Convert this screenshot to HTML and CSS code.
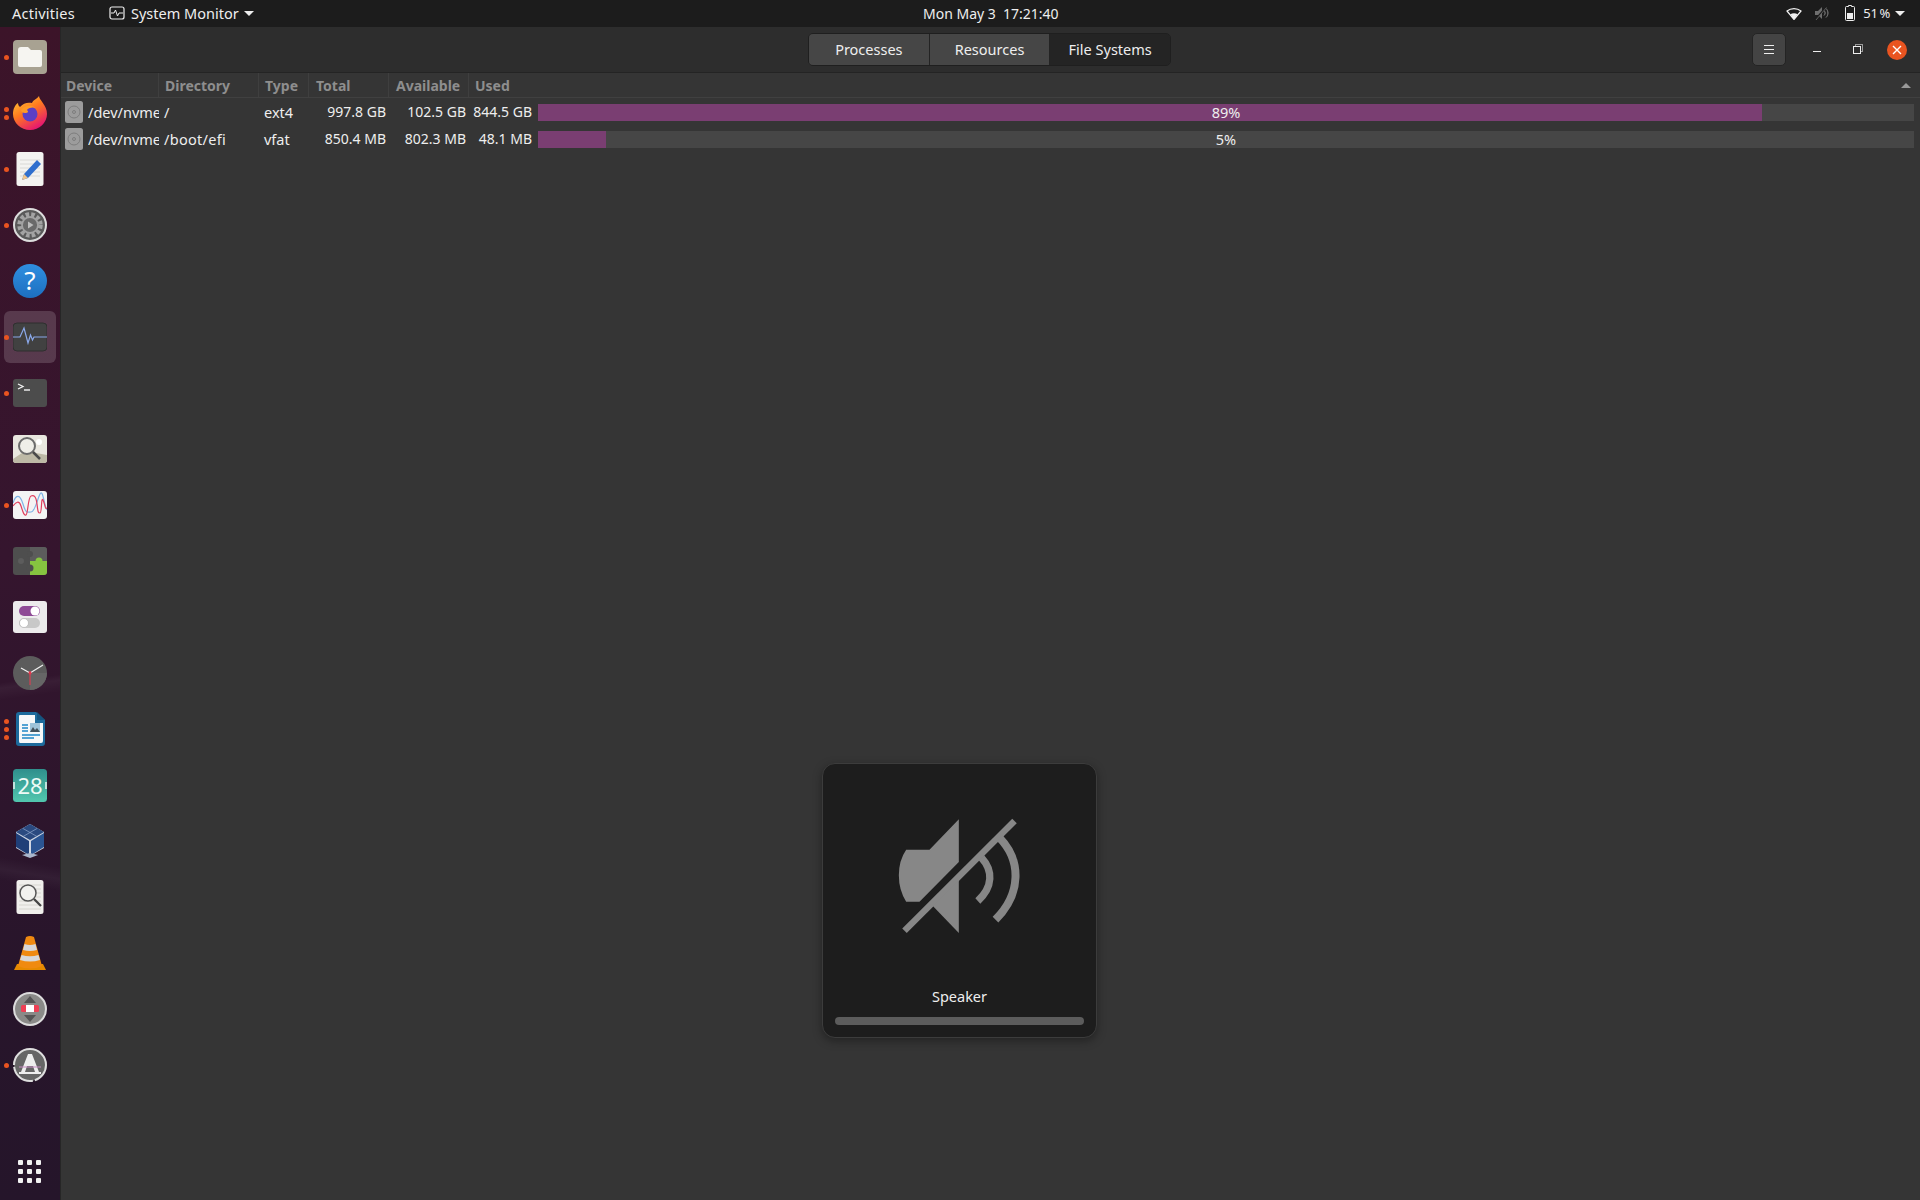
FILE: index.html
```html
<!DOCTYPE html>
<html lang="en">
<head>
    <meta charset="UTF-8">
    <title>System Monitor</title>
    <link rel="stylesheet" href="styles.css">
</head>
<body>
    <header class="topbar">
        <div class="top-left">
            <span class="activities">Activities</span>
            <svg class="app-icon" viewBox="0 0 16 16" width="16" height="16"><rect x="1" y="2" width="14" height="12" rx="2" fill="none" stroke="#eee" stroke-width="1.2"/><path d="M2 8h3l1.500-3 2 6 1.500-3h4" fill="none" stroke="#eee" stroke-width="1"/></svg>
            <span class="app-name">System Monitor</span>
            <span class="caret"></span>
        </div>
        <div class="clock">Mon May 3&nbsp; 17:21:40</div>
        <div class="top-right">
            <svg class="wifi" viewBox="0 0 16 13" width="16" height="13"><path d="M1 4C5 .8 11 .8 15 4L8 12.500z" fill="none" stroke="#f2f2f2" stroke-width="1.200"/><path d="M4.400 7.300C6.400 6 9.600 6 11.600 7.300L8 12.500z" fill="#f2f2f2"/></svg>
            <svg class="vol" viewBox="0 0 14 14" width="14" height="14"><path d="M0 5h3l4-4v12l-4-4H0z" fill="#6f6f6f"/><path d="M9 4.500c1.500 1.500 1.500 3.500 0 5M11 2.500c2.600 2.600 2.600 6.500 0 9" fill="none" stroke="#8a8a8a" stroke-width="1"/><path d="M.5 13.500 11 1" stroke="#1d1d1d" stroke-width="1.600"/><path d="M1 14 11.500 1.500" stroke="#6f6f6f" stroke-width=".8"/></svg>
            <svg class="batt" viewBox="0 0 10 16" width="10" height="16"><path d="M3.500.5h3v1h2a1 1 0 0 1 1 1v12a1 1 0 0 1-1 1h-7a1 1 0 0 1-1-1v-12a1 1 0 0 1 1-1h2z" fill="none" stroke="#eee" stroke-width="1"/><rect x="2" y="8" width="6" height="6" fill="#eee"/></svg>
            <span class="batt-text">51 %</span>
            <span class="caret"></span>
        </div>
    </header>

    <div class="desktop">
        <nav class="dock">
            <div class="dock-item"><span class="dots"><i></i></span>
                <svg viewBox="0 0 34 34"><rect width="34" height="34" rx="4" fill="#a8a292"/><path d="M5 10q0-3 3-3h7l3 3h9q2 0 2 2v13q0 2-2 2H7q-2 0-2-2z" fill="#f6f5f1"/></svg>
            </div>
            <div class="dock-item"><span class="dots"><i></i><i></i></span>
                <svg viewBox="0 0 34 34"><defs><linearGradient id="ff" x1="0" y1="0" x2=".6" y2="1"><stop offset="0" stop-color="#ffd43a"/><stop offset=".5" stop-color="#ff7a1f"/><stop offset="1" stop-color="#e6186f"/></linearGradient></defs><path d="M26 0c0 4 8 9 8 18a17 16 0 0 1-34 0c0-5 2-9 5-11 0 2 1 3 2 4 3-4 8-5 12-4 1-3 5-4 7-7z" fill="url(#ff)"/><circle cx="17" cy="18" r="7.500" fill="#5b3fc4"/><path d="M8 14c3-4 9-6 15-2-4-1-8 0-9 2 2 2 1 3-2 3-2 0-4-1-4-3z" fill="#ff9a26"/></svg>
            </div>
            <div class="dock-item"><span class="dots"><i></i></span>
                <svg viewBox="0 0 34 34"><rect x="3.500" width="27" height="34" rx="2.500" fill="#f3f3f1"/><path d="M7 8h20M7 12h20M7 16h20M7 20h20M7 24h20" stroke="#d9d9d6" stroke-width="1"/><path d="M24 8l4 4-13 14-6 2 2-6z" fill="#2f6fce"/><path d="M11 22l4 4-6 2z" fill="#f0c48a"/></svg>
            </div>
            <div class="dock-item"><span class="dots"><i></i></span>
                <svg viewBox="0 0 34 34"><circle cx="17" cy="17" r="16" fill="#5a5a5a" stroke="#dcdcdc" stroke-width="2"/><circle cx="17" cy="17" r="10.500" fill="none" stroke="#a3a3a3" stroke-width="4.500" stroke-dasharray="3.500 2.100"/><circle cx="17" cy="17" r="8" fill="#6a6a6a" stroke="#a3a3a3" stroke-width="1.800"/><path d="M15 13.500v7l5.500-3.500z" fill="#bcbcbc"/></svg>
            </div>
            <div class="dock-item">
                <svg class="open" viewBox="0 0 34 34"><defs><linearGradient id="hlp" x1="0" y1="0" x2="0" y2="1"><stop offset="0" stop-color="#2f8fe0"/><stop offset="1" stop-color="#1d6fc0"/></linearGradient></defs><circle cx="17" cy="17" r="17" fill="url(#hlp)"/><text x="17" y="26" text-anchor="middle" class="help-mark">?</text></svg>
            </div>
            <div class="dock-item active"><span class="dots"><i></i></span>
                <svg viewBox="0 0 34 34"><rect y="3" width="34" height="28" rx="4" fill="#414141" stroke="#2f2f2f"/><path d="M0 17h7l4-9 4 15 2.500-8 2 5 1.500-3h13.500" fill="none" stroke="#8aa8ea" stroke-width="1.200"/></svg>
            </div>
            <div class="dock-item"><span class="dots"><i></i></span>
                <svg viewBox="0 0 34 34"><rect y="3" width="34" height="28" rx="3" fill="#4c4c4c"/><path d="M5 8l5 2.500L5 13" fill="none" stroke="#f2f2f2" stroke-width="1.300"/><path d="M11 14h6" stroke="#f2f2f2" stroke-width="1.400"/></svg>
            </div>
            <div class="dock-item">
                <svg viewBox="0 0 34 34"><rect y="3" width="34" height="28" rx="3" fill="#e9e7df"/><path d="M0 27l12-8 22 4v5q0 3-3 3H3q-3 0-3-3z" fill="#bdb9a6"/><circle cx="26" cy="10" r="3" fill="#fff"/><circle cx="14" cy="14" r="8" fill="#efeee8" stroke="#6c6c6c" stroke-width="2"/><path d="M20 20l7 7" stroke="#4a4a4a" stroke-width="2.500"/></svg>
            </div>
            <div class="dock-item"><span class="dots"><i></i></span>
                <svg viewBox="0 0 34 34"><rect y="3" width="34" height="28" rx="3" fill="#f4f4f4"/><path d="M0 15C3 6 7 6 10 16S14 24 18 24 24 12 27 6 31 18 34 22" fill="none" stroke="#7fb4e6" stroke-width="1.200"/><path d="M0 18C3 14 6 12 8 18S11 28 13 27 15 9 18 8 23 8 24 16 25 25 27 25 28 8 30 12 32 22 34 20" fill="none" stroke="#e0405f" stroke-width="1.200"/></svg>
            </div>
            <div class="dock-item">
                <svg viewBox="0 0 34 34"><rect y="3" width="34" height="28" rx="3" fill="#4e4e4e"/><path d="M17 3h14q3 0 3 3v11H17z" fill="#5c5c5c"/><path d="M17 17h17v11q0 3-3 3H17z" fill="#86c440"/><circle cx="26" cy="17" r="3.500" fill="#86c440"/><circle cx="17" cy="24" r="3.500" fill="#4e4e4e"/><circle cx="8" cy="17" r="3" fill="#5c5c5c"/><circle cx="17" cy="10" r="3" fill="#4e4e4e"/></svg>
            </div>
            <div class="dock-item">
                <svg viewBox="0 0 34 34"><rect y="1" width="34" height="32" rx="3" fill="#ecebec"/><rect x="6" y="6" width="21" height="10" rx="5" fill="#8e4a96"/><circle cx="22" cy="11" r="4.500" fill="#fff"/><rect x="6" y="18" width="21" height="10" rx="5" fill="#c8c8c8"/><circle cx="11" cy="23" r="4.500" fill="#fff" stroke="#aaa" stroke-width=".6"/></svg>
            </div>
            <div class="dock-item">
                <svg viewBox="0 0 34 34"><circle cx="17" cy="17" r="17" fill="#5c5c5c"/><path d="M17 17L34 17A17 17 0 0 1 17 34z" fill="#666"/><path d="M17 17L8 12M17 17L30 9" stroke="#f0f0f0" stroke-width="1.200"/><path d="M17 15v14" stroke="#e8384f" stroke-width="1"/><circle cx="17" cy="17" r="1.500" fill="#e8384f"/></svg>
            </div>
            <div class="dock-item"><span class="dots"><i></i><i></i><i></i></span>
                <svg viewBox="0 0 34 34"><path d="M6 0h17l9 8v23q0 3-3 3H6q-3 0-3-3V3q0-3 3-3z" fill="#1c6a9c"/><path d="M7 3h15v8h8v18q0 2-2 2H7q-1 0-1-2V4q0-1 1-1z" fill="#f6f8f9"/><path d="M24 0l8 8h-8z" fill="#14547f"/><path d="M9 13h6M9 16h6M9 19h6M9 23h18M9 26h12" stroke="#1f86c6" stroke-width="1.300"/><rect x="17" y="11" width="10" height="9" fill="#9ec3da"/><path d="M17 20l3-5 2 3 2-2 3 4z" fill="#44525c"/></svg>
            </div>
            <div class="dock-item">
                <svg viewBox="0 0 34 34"><defs><linearGradient id="cal" x1="0" y1="0" x2="0" y2="1"><stop offset="0" stop-color="#2f8f8c"/><stop offset="1" stop-color="#52c7ae"/></linearGradient></defs><rect y="1" width="34" height="33" rx="3.500" fill="url(#cal)"/><path d="M1 14v7M33 14v7" stroke="#e8f6f2" stroke-width="1.500"/><text x="17" y="26" text-anchor="middle" class="cal-day">28</text></svg>
            </div>
            <div class="dock-item">
                <svg viewBox="0 0 34 34"><path d="M3 8L17 0l14 8v16l-14 8-14-8z" fill="#cfd6e2"/><path d="M3 8l14-8 14 8-14 8z" fill="#2a4a80"/><path d="M3 9l13 8v14L3 23z" fill="#1f3f78"/><path d="M31 9l-13 8v14l13-8z" fill="#2b5593"/><path d="M10 4.500l14 8M24 4.500l-14 8" stroke="#8fa6cc" stroke-width=".7"/><path d="M9 31l8 3 8-3-8-2z" fill="#aab6cc"/></svg>
            </div>
            <div class="dock-item">
                <svg viewBox="0 0 34 34"><rect x="3.500" width="27" height="34" rx="2.500" fill="#f0efec"/><path d="M6 5h22M6 9h22M6 13h22M6 17h22M6 21h22M6 25h22M6 29h22" stroke="#d7d6d0" stroke-width="1"/><circle cx="15" cy="13" r="8" fill="#f2f2ef" stroke="#555" stroke-width="1.500"/><path d="M21 19l7 7" stroke="#444" stroke-width="2.300"/></svg>
            </div>
            <div class="dock-item">
                <svg viewBox="0 0 34 34"><path d="M1 34l3-6h26l3 6z" fill="#e68a00"/><path d="M13 1q4-2 8 0l8 29q-12 5-24 0z" fill="#f08a10"/><path d="M11.500 8q5.500 2 11 0l1.500 6q-7 2-14 0zM8.500 19q8.500 2.500 17 0l1.500 5q-10 3-20 0z" fill="#d8d8d8"/></svg>
            </div>
            <div class="dock-item">
                <svg viewBox="0 0 34 34"><circle cx="17" cy="17" r="16" fill="#8a8a88" stroke="#dcdcdc" stroke-width="2"/><path d="M17 4l6 7H11zM17 30l-6-7h12z" fill="#555"/><rect x="8" y="13" width="18" height="7" rx="1.500" fill="#ee4055"/><rect x="13" y="13" width="8" height="7" fill="#fff"/></svg>
            </div>
            <div class="dock-item"><span class="dots"><i></i></span>
                <svg viewBox="0 0 34 34"><circle cx="17" cy="17" r="16" fill="#666" stroke="#dedede" stroke-width="2" stroke-dasharray="20 2 26 2 50 0"/><path d="M15 6h4l7 18h-4l-2-6h-6l-2 6H8z" fill="#eee"/><path d="M6 19h22" stroke="#c98cc4" stroke-width="1"/><path d="M6 25h22" stroke="#eee" stroke-width="2"/></svg>
            </div>
            <div class="dock-grid">
                <i></i><i></i><i></i><i></i><i></i><i></i><i></i><i></i><i></i>
            </div>
        </nav>

        <main class="window">
            <div class="headerbar">
                <div class="switcher">
                    <button class="tab">Processes</button>
                    <button class="tab">Resources</button>
                    <button class="tab checked">File Systems</button>
                </div>
                <div class="win-controls">
                    <button class="menu-btn"><span></span><span></span><span></span></button>
                    <span class="ctl-min"></span>
                    <span class="ctl-max"></span>
                    <span class="ctl-close">
                        <svg viewBox="0 0 10 10" width="10" height="10"><path d="M1 1l8 8M9 1l-8 8" stroke="#fff" stroke-width="1.400"/></svg>
                    </span>
                </div>
            </div>

            <div class="fs-table">
                <div class="row head">
                    <div class="cell">Device</div>
                    <div class="cell">Directory</div>
                    <div class="cell">Type</div>
                    <div class="cell">Total</div>
                    <div class="cell">Available</div>
                    <div class="cell used-head">Used<span class="sort-arrow"></span></div>
                </div>
                <div class="row">
                    <div class="cell device"><svg viewBox="0 0 18 22" width="18" height="22"><rect width="18" height="22" rx="2.500" fill="#9c9c9c"/><circle cx="9" cy="11" r="6" fill="none" stroke="#7d7d7d"/><circle cx="9" cy="11" r="1.500" fill="none" stroke="#7d7d7d"/></svg><span class="clip">/dev/nvme</span></div>
                    <div class="cell">/</div>
                    <div class="cell">ext4</div>
                    <div class="cell num">997.8 GB</div>
                    <div class="cell num">102.5 GB</div>
                    <div class="cell used"><span class="used-val">844.5 GB</span><div class="bar"><div class="fill" style="width: 88.95%"></div><span class="pct">89%</span></div></div>
                </div>
                <div class="row">
                    <div class="cell device"><svg viewBox="0 0 18 22" width="18" height="22"><rect width="18" height="22" rx="2.500" fill="#9c9c9c"/><circle cx="9" cy="11" r="6" fill="none" stroke="#7d7d7d"/><circle cx="9" cy="11" r="1.500" fill="none" stroke="#7d7d7d"/></svg><span class="clip">/dev/nvme</span></div>
                    <div class="cell wide">/boot/efi</div>
                    <div class="cell">vfat</div>
                    <div class="cell num">850.4 MB</div>
                    <div class="cell num">802.3 MB</div>
                    <div class="cell used"><span class="used-val">48.1 MB</span><div class="bar"><div class="fill" style="width: 4.94%"></div><span class="pct">5%</span></div></div>
                </div>
            </div>
        </main>
    </div>

    <div class="osd">
        <svg class="osd-icon" viewBox="260 200 380 360" width="127" height="120">
            <path d="M448 207L360 298H290Q268 330 268 375T290 454H330L448 335Z" fill="#878787"/>
            <path d="M370 467L448 390V548Z" fill="#878787"/>
            <path d="M285 541L615 212" stroke="#878787" stroke-width="19" fill="none"/>
            <path d="M516 322C551 360 551 410 505 452" stroke="#878787" stroke-width="22" fill="none"/>
            <path d="M570 262C636 330 636 430 558 508" stroke="#878787" stroke-width="24" fill="none"/>
        </svg>
        <div class="osd-label">Speaker</div>
        <div class="osd-bar"></div>
    </div>
</body>
</html>
```

FILE: styles.css
```css
* {
    margin: 0;
    padding: 0;
    box-sizing: border-box;
}
body {
    width: 1920px;
    height: 1200px;
    overflow: hidden;
    background: #353535;
    color: #eeeeee;
    font-family: "Noto Sans", "Open Sans", sans-serif;
    font-size: 14.5px;
    position: relative;
}

/* top panel */
.topbar {
    height: 27px;
    padding-bottom: 1px;
    background: #1c1c1c;
    display: grid;
    grid-template-columns: 923px auto 1fr;
    align-items: center;
}
.top-left {
    display: flex;
    align-items: center;
    padding-left: 12px;
}
.activities {
    width: 97px;
    letter-spacing: 0.25px;
}
.app-icon {
    margin-right: 6px;
}
.app-name {
    width: 113px;
}
.caret {
    width: 0;
    height: 0;
    border-left: 5px solid transparent;
    border-right: 5px solid transparent;
    border-top: 5px solid #eeeeee;
}
.clock {
    font-size: 14px;
}
.top-right {
    display: flex;
    align-items: center;
    justify-content: flex-end;
    padding-right: 15px;
}
.wifi {
    margin-right: 13px;
}
.vol {
    margin-right: 16px;
}
.batt {
    margin-right: 8px;
}
.batt-text {
    margin-right: 5px;
    font-size: 13px;
    word-spacing: -1.5px;
    letter-spacing: -0.2px;
}

.desktop {
    display: flex;
    height: 1173px;
}

/* dock */
.dock {
    width: 60px;
    flex-shrink: 0;
    padding-top: 2px;
    display: flex;
    flex-direction: column;
    background:
        linear-gradient(172deg, transparent 55.5%, rgba(255,255,255,0.04) 56%, transparent 57%),
        linear-gradient(190deg, transparent 71%, rgba(255,255,255,0.04) 72%, transparent 73%),
        linear-gradient(180deg, #3c1429 0%, #35152e 45%, #28152b 80%, #25152a 100%);
}
.dock-item {
    height: 56px;
    display: flex;
    align-items: center;
    justify-content: center;
    position: relative;
    flex-shrink: 0;
}
.dock-item svg {
    width: 34px;
    height: 34px;
    position: relative;
}
.dock-item svg.open {
    overflow: visible;
}
.dock-item.active::before {
    content: "";
    position: absolute;
    left: 4px;
    right: 4px;
    top: 2px;
    bottom: 2px;
    border-radius: 6px;
    background: rgba(255, 255, 255, 0.16);
}
.dots {
    position: absolute;
    left: 4px;
    top: 0;
    bottom: 0;
    display: flex;
    flex-direction: column;
    justify-content: center;
    gap: 3px;
    z-index: 1;
}
.dots i {
    display: block;
    width: 5px;
    height: 5px;
    border-radius: 50%;
    background: #e95420;
}
.dock-grid {
    margin: auto 0 17px 18px;
    display: grid;
    grid-template-columns: repeat(3, 5px);
    gap: 4px;
}
.dock-grid i {
    width: 5px;
    height: 5px;
    border-radius: 1px;
    background: #f2f2f2;
}
.help-mark {
    font-family: "Noto Sans", sans-serif;
    font-size: 26px;
    fill: #ffffff;
}
.cal-day {
    font-family: "Noto Sans", sans-serif;
    font-size: 22px;
    fill: #eefaf6;
}

/* window */
.window {
    flex: 1;
    border-left: 1px solid #262626;
    background: #353535;
}
.headerbar {
    height: 46px;
    background: #2d2d2d;
    border-bottom: 1px solid #242424;
    display: flex;
    align-items: center;
    justify-content: center;
    position: relative;
}
.switcher {
    display: flex;
    width: 363px;
    height: 33px;
    margin-right: 2px;
    border: 1px solid #1f1f1f;
    border-radius: 5px;
    overflow: hidden;
}
.tab {
    flex: 1;
    padding-bottom: 2px;
    border: none;
    border-right: 1px solid #232323;
    background: #464646;
    color: #eeeeee;
    font: inherit;
}
.tab.checked {
    background: #242424;
    border-right: none;
}
.win-controls {
    position: absolute;
    top: 6px;
    left: 1691px;
    display: flex;
    align-items: center;
    height: 33px;
}
.menu-btn {
    width: 34px;
    height: 33px;
    background: #444444;
    border: 1px solid #242424;
    border-radius: 5px;
    display: flex;
    flex-direction: column;
    align-items: center;
    justify-content: center;
    gap: 3px;
}
.menu-btn span {
    width: 10px;
    height: 1px;
    background: #eeeeee;
}
.ctl-min {
    width: 8px;
    height: 1px;
    background: #eeeeee;
    margin: 3px 0 0 27px;
}
.ctl-max {
    width: 8px;
    height: 8px;
    border: 1px solid #eeeeee;
    margin-left: 32px;
    box-shadow: 2px -2px 0 -1px #2d2d2d, 2px -2px 0 0 #999999;
}
.ctl-close {
    width: 20px;
    height: 20px;
    border-radius: 50%;
    background: #e95420;
    margin-left: 26px;
    display: flex;
    align-items: center;
    justify-content: center;
}

/* file systems table */
.row {
    display: grid;
    grid-template-columns: 98px 100px 50px 80px 80px 1fr;
    height: 27px;
    padding-bottom: 2px;
    align-items: center;
    background: #353535;
}
.row.head {
    height: 25px;
    padding-bottom: 0;
    margin-bottom: 1px;
    border-bottom: 1px solid #404040;
    color: #8e8e8e;
    font-weight: 700;
    font-size: 14px;
}
.row.head .cell {
    height: 100%;
    display: flex;
    align-items: center;
    padding-left: 6px;
    border-right: 1px solid #3f3f3f;
}
.row.head .cell:first-child {
    padding-left: 5px;
}
.row.head .cell:nth-child(4),
.row.head .cell:nth-child(5) {
    padding-left: 7px;
}
.row.head .used-head {
    border-right: none;
    justify-content: space-between;
    padding-right: 9px;
}
.sort-arrow {
    width: 0;
    height: 0;
    border-left: 5px solid transparent;
    border-right: 5px solid transparent;
    border-bottom: 5px solid #999999;
}
.cell {
    padding-left: 5px;
    white-space: nowrap;
    overflow: hidden;
}
.cell.wide {
    letter-spacing: 0.3px;
}
.cell.device {
    display: flex;
    align-items: center;
    gap: 5px;
    padding-left: 4px;
}
.device svg {
    flex-shrink: 0;
}
.clip {
    overflow: hidden;
}
.cell.num {
    font-size: 14px;
    text-align: right;
    padding-right: 3px;
}
.cell.used {
    display: flex;
    align-items: center;
    padding-left: 0;
    height: 27px;
    margin-bottom: -2px;
}
.used-val {
    width: 63px;
    font-size: 14px;
    text-align: right;
    flex-shrink: 0;
    padding-bottom: 2px;
}
.bar {
    flex: 1;
    height: 17px;
    margin: 0 6px 0 6px;
    background: #464646;
    position: relative;
}
.fill {
    height: 100%;
    background: #7a3e72;
}
.pct {
    position: absolute;
    top: 0;
    bottom: 0;
    left: 0;
    right: 0;
    text-align: center;
    line-height: 17px;
    font-size: 14.5px;
}

/* volume popup */
.osd {
    position: absolute;
    left: 822px;
    top: 763px;
    width: 275px;
    height: 275px;
    padding: 53px 12px 0;
    background: #1d1d1d;
    border: 1px solid #3c3c3c;
    border-radius: 13px;
    box-shadow: 0 3px 10px rgba(0, 0, 0, 0.35);
    display: flex;
    flex-direction: column;
    align-items: center;
}
.osd-label {
    margin-top: 49px;
    line-height: 20px;
}
.osd-bar {
    width: 100%;
    height: 8px;
    margin-top: 11px;
    border-radius: 4px;
    background: #5c5c5c;
}
```
